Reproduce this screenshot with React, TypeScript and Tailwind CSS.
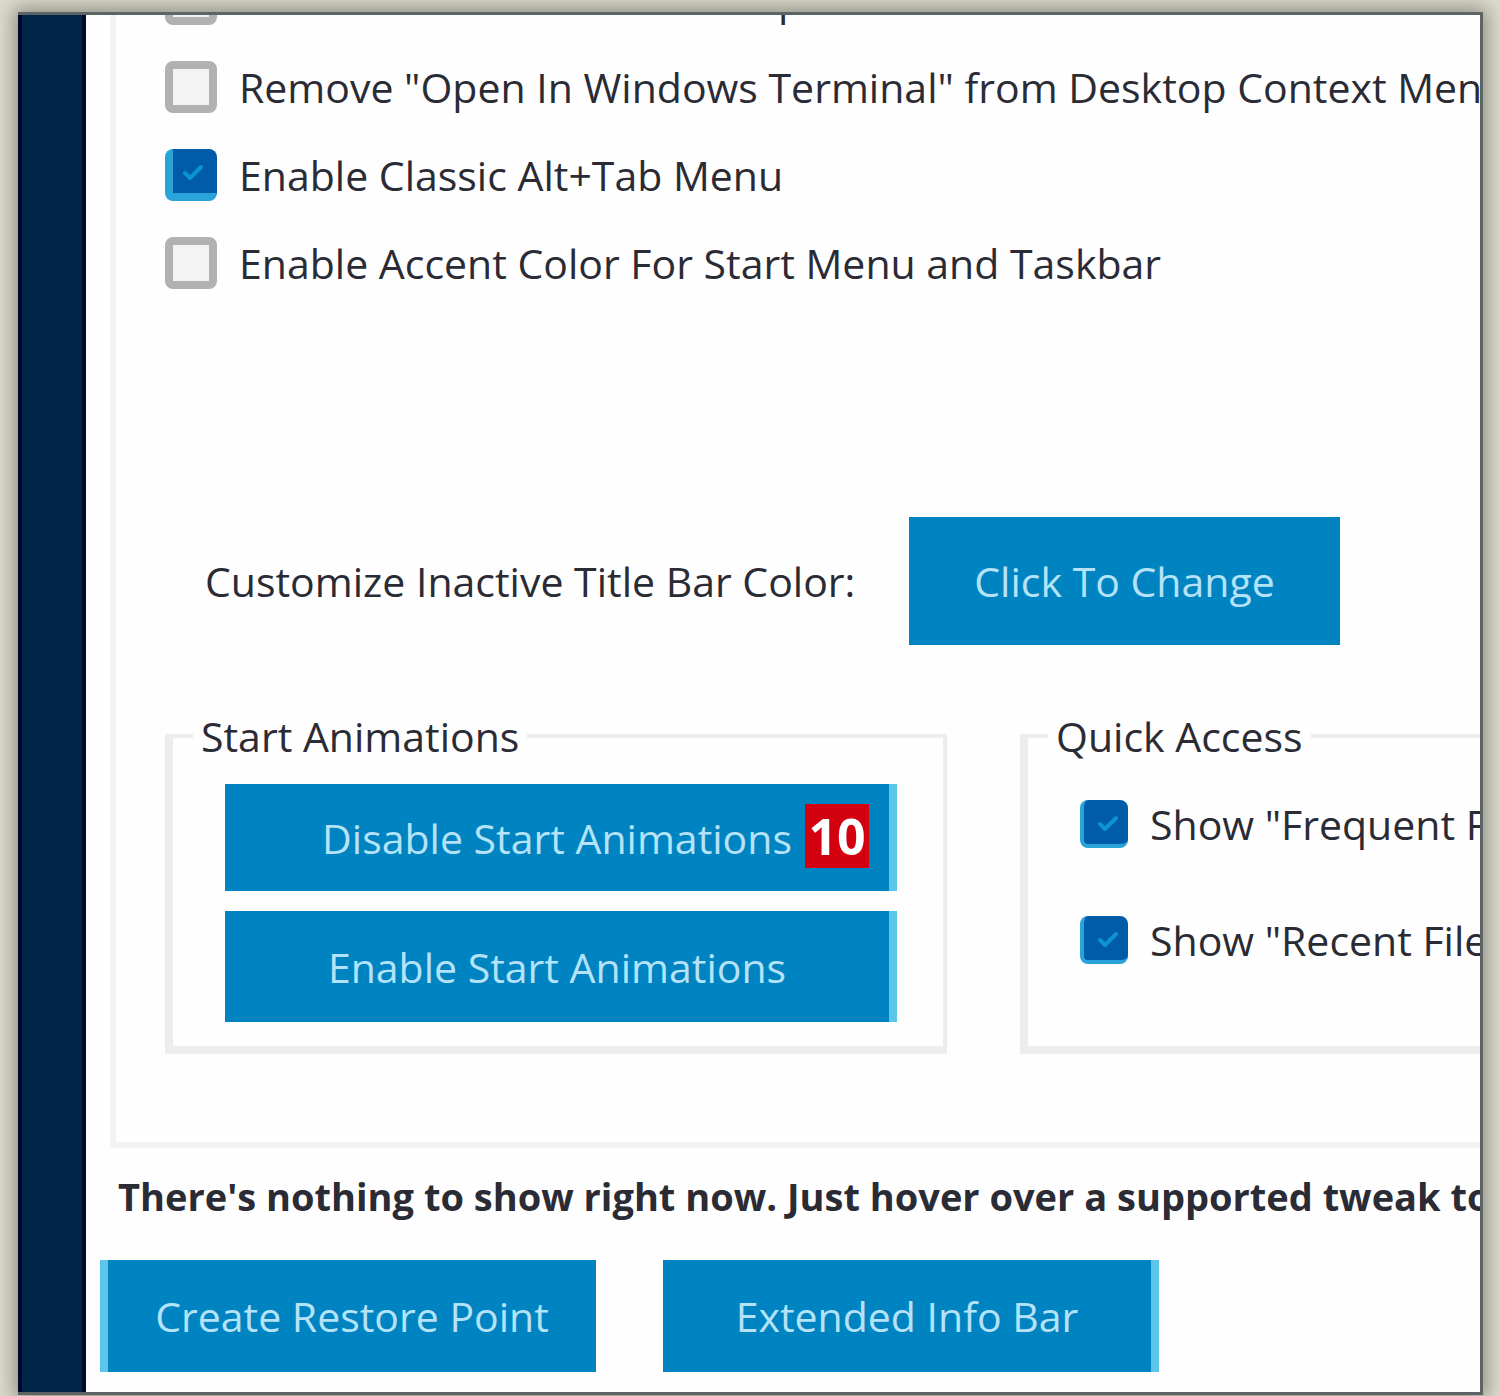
import React, { useState } from 'react';
import { Check } from 'lucide-react';
import clsx from 'clsx';

interface TweakCheckboxProps {
  id: string;
  label: string;
  defaultChecked?: boolean;
  small?: boolean;
}

function TweakCheckbox({
  id,
  label,
  defaultChecked = false,
  small = false,
}: TweakCheckboxProps) {
  const [checked, setChecked] = useState(defaultChecked);

  return (
    <div className="flex items-center whitespace-nowrap">
      <span className="relative flex shrink-0">
        <input
          id={id}
          type="checkbox"
          checked={checked}
          onChange={(e) => setChecked(e.target.checked)}
          className={clsx(
            'appearance-none rounded-lg',
            small ? 'size-12' : 'size-[52px]',
            checked && small && 'border-b-4 border-l-4',
            checked && !small && 'border-b-8 border-l-8',
            checked
              ? 'border-[#2aa3d9] bg-[#005ba9]'
              : 'border-8 border-[#b1b1b1] bg-[#f3f3f3]',
          )}
        />
        {checked && (
          <Check
            className="pointer-events-none absolute top-3 left-4 size-6 text-[#0c93d3]"
            strokeWidth={4}
          />
        )}
      </span>
      <label htmlFor={id} className="pl-[22px]">
        {label}
      </label>
    </div>
  );
}

interface ActionButtonProps {
  className?: string;
  children: React.ReactNode;
}

function ActionButton({ className, children }: ActionButtonProps) {
  return (
    <button
      type="button"
      className={clsx(
        'flex shrink-0 items-center justify-center bg-[#0084c1] whitespace-nowrap text-[#b4e2f7]',
        className,
      )}
    >
      {children}
    </button>
  );
}

interface GroupBoxProps {
  title: string;
  className?: string;
  children: React.ReactNode;
}

function GroupBox({ title, className, children }: GroupBoxProps) {
  return (
    <fieldset
      className={clsx(
        'shrink-0 border-4 border-b-8 border-l-8 border-[#ededed]',
        className,
      )}
    >
      <legend className="ml-5 px-2 leading-12">{title}</legend>
      {children}
    </fieldset>
  );
}

const TWEAKS = [
  { id: 'share', label: 'Remove Share Item From Explorer Context Menu' },
  {
    id: 'terminal',
    label: 'Remove "Open In Windows Terminal" from Desktop Context Menu',
  },
  { id: 'alt-tab', label: 'Enable Classic Alt+Tab Menu', checked: true },
  { id: 'accent', label: 'Enable Accent Color For Start Menu and Taskbar' },
];

export default function App() {
  return (
    <div className="min-h-screen bg-[#dcdccd] pt-3 pr-[17px] pb-px pl-[18px] font-['Open_Sans','Noto_Sans',sans-serif] text-[41px] leading-12 text-[#2b2b35]">
      <div className="flex overflow-hidden border-3 border-l-0 border-[#5d6465] bg-[#fefefe] shadow-[0_0_18px_4px_#8d8d82]">
        <aside className="w-[68px] shrink-0 border-x-4 border-[#000a2c] bg-[#002549]" />

        <main className="min-w-0 flex-1">
          <section className="ml-6 overflow-hidden border-b-6 border-l-6 border-[#f3f3f3] pb-[88px] pl-[49px]">
            <div className="-mt-[60px]">
              {TWEAKS.map((tweak) => (
                <div key={tweak.id} className="flex h-[88px] items-center">
                  <TweakCheckbox
                    id={tweak.id}
                    label={tweak.label}
                    defaultChecked={tweak.checked}
                  />
                </div>
              ))}
            </div>

            <div className="mt-[210px] flex items-center gap-12 pl-10 whitespace-nowrap">
              <span className="w-[656px] shrink-0">
                Customize Inactive Title Bar Color:
              </span>
              <ActionButton className="h-32 w-[431px]">
                Click To Change
              </ActionButton>
            </div>

            <div className="mt-[67px] flex items-stretch gap-[73px]">
              <GroupBox title="Start Animations" className="w-[782px]">
                <div className="flex flex-col gap-5 pt-6 pr-[46px] pb-6 pl-[52px]">
                  <div className="relative flex">
                    <ActionButton className="h-[107px] flex-1 border-r-8 border-[#5cc5ea]">
                      Disable Start Animations
                    </ActionButton>
                    <span className="absolute top-5 right-7 flex size-16 items-center justify-center bg-[#d3000f] text-[50px] font-bold text-white">
                      10
                    </span>
                  </div>
                  <ActionButton className="h-[111px] border-r-8 border-[#5cc5ea]">
                    Enable Start Animations
                  </ActionButton>
                </div>
              </GroupBox>

              <GroupBox title="Quick Access" className="w-[782px]">
                <div className="flex flex-col gap-[68px] pt-10 pl-[52px]">
                  <TweakCheckbox
                    id="frequent"
                    label={'Show "Frequent Folders" In Quick Access'}
                    defaultChecked
                    small
                  />
                  <TweakCheckbox
                    id="recent"
                    label={'Show "Recent Files" In Quick Access'}
                    defaultChecked
                    small
                  />
                </div>
              </GroupBox>
            </div>
          </section>

          <p className="overflow-hidden pt-6 pb-10 pl-8 text-[38px] font-bold whitespace-nowrap">
            There's nothing to show right now. Just hover over a supported tweak
            to see more details.
          </p>

          <div className="flex gap-[67px] pb-5 pl-[14px]">
            <ActionButton className="h-28 w-[496px] border-l-8 border-[#5cc5ea]">
              Create Restore Point
            </ActionButton>
            <ActionButton className="h-28 w-[496px] border-r-8 border-[#5cc5ea]">
              Extended Info Bar
            </ActionButton>
          </div>
        </main>
      </div>
    </div>
  );
}
